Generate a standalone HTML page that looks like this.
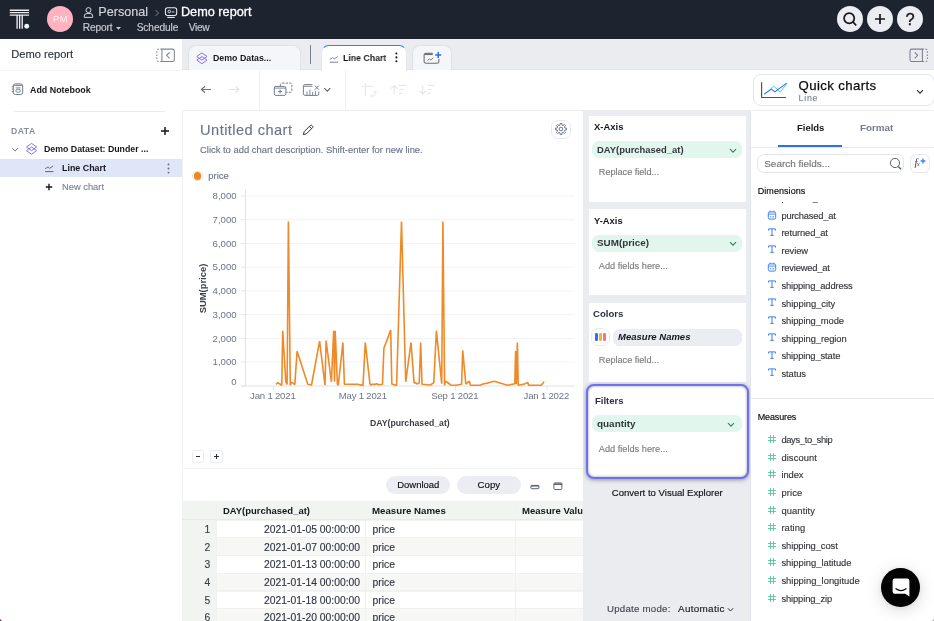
<!DOCTYPE html>
<html lang="en">
<head>
<meta charset="utf-8">
<title>Demo report</title>
<style>
*{margin:0;padding:0;box-sizing:border-box}
html,body{width:934px;height:621px;overflow:hidden;background:#fff}
body{font-family:"Liberation Sans",Arial,sans-serif;color:#1f2430;position:relative;font-size:11px}
.abs{position:absolute}
.t{position:absolute;white-space:nowrap;line-height:16px;height:16px}
.b{font-weight:bold}
.fld{font-size:10.3px;color:#2f3440;letter-spacing:.05px}
.ax{font-family:"Liberation Sans",Arial,sans-serif;font-size:9.6px;fill:#6b7489}
#nav{left:0;top:0;width:934px;height:38.7px;background:#1e2330}
.circ{position:absolute;width:26px;height:26px;border-radius:50%;background:#ebedf2;top:5.5px}
#side{left:0;top:38.7px;width:182.6px;height:582.3px;background:#fff;border-right:1px solid #f0f1f4}
#tabs{left:182px;top:38.7px;width:752px;height:31.8px;background:#ebecf0;border-bottom:1px solid #e1e4ea}
.tab{position:absolute;border:1px solid #dfe2e9;border-bottom:none;border-radius:8px 8px 0 0;background:#f5f6f9}
#tool{left:182px;top:70.5px;width:752px;height:40.5px;background:#fff;border-bottom:1px solid #ebedf0}
#cfg{left:583px;top:111px;width:167.2px;height:510px;background:#ebecf0}
.card{position:absolute;left:5.8px;width:157.2px;background:#fff}
.pill{position:absolute;left:8.8px;width:150.6px;height:17.2px;border-radius:6.5px;background:#e1f6ec}
.lbl{font-size:11px;font-weight:bold;color:#1f2430;left:10.5px}
.ph{font-size:10px;color:#8a8f99;left:15.5px}
#right{left:750.2px;top:111px;width:183.8px;height:510px;background:#fff;border-left:1px solid #dfe3ee}
</style>
</head>
<body>
<div id="app" style="position:absolute;left:0;top:0;width:934px;height:621px;will-change:transform">

<!-- ===== top navigation ===== -->
<div id="nav" class="abs">
  
  <div class="abs" style="left:47.3px;top:5.7px;width:26px;height:26px;border-radius:50%;background:#ffb3c0;color:#fff6f8;font-size:9.2px;line-height:26.5px;text-align:center;letter-spacing:.55px;text-indent:.5px">PM</div>
    <svg class="abs" style="left:153.5px;top:8.5px" width="6" height="8" viewBox="0 0 6 8"><path d="M1.5 1l3 3-3 3" fill="none" stroke="#7f8595" stroke-width="1"/></svg>
    <svg class="abs" style="left:116.2px;top:26.6px" width="5" height="3" viewBox="0 0 5 3"><path d="M0 0h5L2.5 2.8z" fill="#c9ccd3"/></svg>

  <div class="circ" style="left:836.8px"><svg width="26" height="26" viewBox="0 0 26 26"><circle cx="12.2" cy="12.2" r="5.1" fill="none" stroke="#15171c" stroke-width="1.7"/><path d="M16 16l3.2 3.4" stroke="#15171c" stroke-width="1.7" fill="none"/></svg></div>
  <div class="circ" style="left:866.9px"><svg width="26" height="26" viewBox="0 0 26 26"><path d="M13 8v10M8 13h10" stroke="#15171c" stroke-width="1.7" fill="none"/></svg></div>
  <div class="circ" style="left:897.2px;color:#15171c;font-size:16.5px;line-height:26.5px;text-align:center;-webkit-text-stroke:.35px #15171c">?</div>
</div>

<!-- ===== left sidebar ===== -->
<div id="side" class="abs"></div>
<div class="abs" style="left:0;top:70px;width:181px;height:1px;background:#f1f2f5"></div>
<div class="abs" style="left:14px;top:111px;width:151px;height:1px;background:#e8eaee"></div>
<svg class="abs" style="left:160px;top:126px" width="10" height="10" viewBox="0 0 10 10"><path d="M5 1v8M1 5h8" stroke="#15171c" stroke-width="1.5" fill="none"/></svg>
<div class="abs" style="left:0;top:158.8px;width:182px;height:18.3px;background:#dfe6f8"></div>
<svg class="abs" style="left:167.300px;top:162.500px" width="3" height="11" viewBox="0 0 3 11"><circle cx="1.500" cy="1.400" r="0.950" fill="#656c7d"/><circle cx="1.500" cy="5.500" r="0.950" fill="#656c7d"/><circle cx="1.500" cy="9.600" r="0.950" fill="#656c7d"/></svg>
<svg class="abs" style="left:44.9px;top:183.2px" width="8" height="8" viewBox="0 0 8 8"><path d="M4 0.800v6.400M0.800 4h6.400" stroke="#15171c" stroke-width="1.400" fill="none"/></svg>

<!-- ===== tab bar ===== -->
<div id="tabs" class="abs"></div>
<div class="tab" style="left:188px;top:45.3px;width:112.5px;height:25px"></div>
<div class="tab" style="left:320.8px;top:44.7px;width:86.2px;height:27px;background:#fff;border-top:1.7px solid #3b7cf0;border-color:#3b7cf0 #e4e7ee #e4e7ee"></div>
<div class="tab" style="left:412.2px;top:45.3px;width:39.5px;height:25px"></div>
<div class="abs" style="left:310px;top:45.200px;width:1px;height:18.500px;background:#7a8194"></div>

<!-- ===== toolbar ===== -->
<div id="tool" class="abs"></div>
<div class="abs" style="left:259px;top:71px;width:1px;height:39.500px;background:#eef0f3"></div>
<div class="abs" style="left:345px;top:71px;width:1px;height:39.500px;background:#eef0f3"></div>

<!-- quick charts selector -->
<div class="abs" style="left:753px;top:74px;width:182px;height:31.600px;border:1px solid #e3e5ea;border-radius:8px;background:#fff"></div>
<svg class="abs" style="left:916px;top:88.500px" width="8" height="6" viewBox="0 0 8 6"><path d="M1 1.200l3 3 3-3" fill="none" stroke="#2a2f3d" stroke-width="1.200"/></svg>

<!-- ===== chart panel ===== -->
<svg class="abs" style="left:302px;top:124px" width="12" height="12" viewBox="0 0 12 12"><path d="M1.400 10.600l0.800-3L8.400 1.400a1 1 0 0 1 1.400 0l0.800 0.800a1 1 0 0 1 0 1.400L4.400 9.800z" fill="none" stroke="#2a2f3d" stroke-width="1"/><path d="M7.400 2.400l2.200 2.200" stroke="#2a2f3d" stroke-width="1"/></svg>
<div class="abs" style="left:551px;top:119.800px;width:19.500px;height:19.500px;border:1px solid #e6e8ee;border-radius:7px;background:#fff"></div>
<svg class="abs" style="left:554.7px;top:123.2px" width="12" height="12" viewBox="0 0 12 12"><circle cx="6" cy="6" r="1.8" fill="none" stroke="#666d7e" stroke-width="0.9"/><path d="M5.07 2.11L5.12 0.47L6.88 0.47L6.93 2.11L8.09 2.59L9.29 1.47L10.53 2.71L9.41 3.91L9.89 5.07L11.53 5.12L11.53 6.88L9.89 6.93L9.41 8.09L10.53 9.29L9.29 10.53L8.09 9.41L6.93 9.89L6.88 11.53L5.12 11.53L5.07 9.89L3.91 9.41L2.71 10.53L1.47 9.29L2.59 8.09L2.11 6.93L0.47 6.88L0.47 5.12L2.11 5.07L2.59 3.91L1.47 2.71L2.71 1.47L3.91 2.59z" fill="none" stroke="#666d7e" stroke-width="0.9" stroke-linejoin="round"/></svg>

<div class="abs" style="left:192.300px;top:171px;width:10.400px;height:10.400px;border-radius:50%;border:1px solid #e2e2e2;background:#fff"></div>
<div class="abs" style="left:193.700px;top:172.400px;width:7.600px;height:7.600px;border-radius:50%;background:#f0861f"></div>

<svg class="abs" style="left:0;top:0" width="934" height="621" viewBox="0 0 934 621">
<line x1="245.5" y1="196.0" x2="574.5" y2="196.0" stroke="#f3f3f3" stroke-width="1"/>
<line x1="241" y1="196.0" x2="245.5" y2="196.0" stroke="#e4e4e4" stroke-width="1"/>
<line x1="245.5" y1="219.7" x2="574.5" y2="219.7" stroke="#f3f3f3" stroke-width="1"/>
<line x1="241" y1="219.7" x2="245.5" y2="219.7" stroke="#e4e4e4" stroke-width="1"/>
<line x1="245.5" y1="243.5" x2="574.5" y2="243.5" stroke="#f3f3f3" stroke-width="1"/>
<line x1="241" y1="243.5" x2="245.5" y2="243.5" stroke="#e4e4e4" stroke-width="1"/>
<line x1="245.5" y1="267.2" x2="574.5" y2="267.2" stroke="#f3f3f3" stroke-width="1"/>
<line x1="241" y1="267.2" x2="245.5" y2="267.2" stroke="#e4e4e4" stroke-width="1"/>
<line x1="245.5" y1="290.9" x2="574.5" y2="290.9" stroke="#f3f3f3" stroke-width="1"/>
<line x1="241" y1="290.9" x2="245.5" y2="290.9" stroke="#e4e4e4" stroke-width="1"/>
<line x1="245.5" y1="314.6" x2="574.5" y2="314.6" stroke="#f3f3f3" stroke-width="1"/>
<line x1="241" y1="314.6" x2="245.5" y2="314.6" stroke="#e4e4e4" stroke-width="1"/>
<line x1="245.5" y1="338.4" x2="574.5" y2="338.4" stroke="#f3f3f3" stroke-width="1"/>
<line x1="241" y1="338.4" x2="245.5" y2="338.4" stroke="#e4e4e4" stroke-width="1"/>
<line x1="245.5" y1="362.1" x2="574.5" y2="362.1" stroke="#f3f3f3" stroke-width="1"/>
<line x1="241" y1="362.1" x2="245.5" y2="362.1" stroke="#e4e4e4" stroke-width="1"/>
<line x1="241" y1="385.8" x2="245.5" y2="385.8" stroke="#e4e4e4" stroke-width="1"/>
<line x1="245.500" y1="190" x2="245.500" y2="386.500" stroke="#e2e2e2" stroke-width="1"/>
<line x1="241" y1="386" x2="574.500" y2="386" stroke="#e2e2e2" stroke-width="1"/>
<text x="236.6" y="199.2" text-anchor="end" class="ax">8,000</text>
<text x="236.6" y="222.9" text-anchor="end" class="ax">7,000</text>
<text x="236.6" y="246.7" text-anchor="end" class="ax">6,000</text>
<text x="236.6" y="270.4" text-anchor="end" class="ax">5,000</text>
<text x="236.6" y="294.1" text-anchor="end" class="ax">4,000</text>
<text x="236.6" y="317.8" text-anchor="end" class="ax">3,000</text>
<text x="236.6" y="341.6" text-anchor="end" class="ax">2,000</text>
<text x="236.6" y="365.3" text-anchor="end" class="ax">1,000</text>
<text x="236.6" y="385.4" text-anchor="end" class="ax">0</text>
<line x1="273.6" y1="386" x2="273.6" y2="390.5" stroke="#e4e4e4" stroke-width="1"/>
<text x="272.8" y="398.6" text-anchor="middle" class="ax" style="font-size:9.6px;letter-spacing:-.2px">Jan 1 2021</text>
<line x1="363.6" y1="386" x2="363.6" y2="390.5" stroke="#e4e4e4" stroke-width="1"/>
<text x="362.8" y="398.6" text-anchor="middle" class="ax" style="font-size:9.6px;letter-spacing:-.2px">May 1 2021</text>
<line x1="455.6" y1="386" x2="455.6" y2="390.5" stroke="#e4e4e4" stroke-width="1"/>
<text x="454.8" y="398.6" text-anchor="middle" class="ax" style="font-size:9.6px;letter-spacing:-.2px">Sep 1 2021</text>
<line x1="547.1" y1="386" x2="547.1" y2="390.5" stroke="#e4e4e4" stroke-width="1"/>
<text x="546.3000000000001" y="398.6" text-anchor="middle" class="ax" style="font-size:9.6px;letter-spacing:-.2px">Jan 1 2022</text>
<text transform="translate(206.300,288.500) rotate(-90)" text-anchor="middle" style="font-family:'Liberation Sans',Arial,sans-serif;font-size:9.400px;font-weight:bold;fill:#3a3f4a">SUM(price)</text>

<polyline points="276.2,384.5 277.7,382.6 281.8,385.2 282.7,330.7 285.8,382.0 287.1,384.5 288.4,221.5 290.3,385.4 291.2,382.2 293.1,383.1 294.8,384.8 297.1,351.3 307.8,384.3 311.5,385.0 319.6,341.1 325.0,385.2 326.1,340.5 331.4,381.8 333.7,330.7 334.5,381.8 335.2,330.7 337.4,384.3 338.3,385.2 342.9,342.5 344.4,384.3 357.4,384.3 363.0,385.4 365.3,342.5 369.9,383.7 371.0,385.2 372.4,384.0 374.7,384.5 376.6,383.7 378.6,384.8 382.5,384.3 383.9,348.2 390.7,330.1 391.8,384.0 396.6,385.4 401.5,221.5 405.7,381.8 411.0,342.5 414.1,383.1 415.5,382.6 416.9,384.0 419.2,383.1 420.7,342.5 422.0,384.3 430.5,385.0 433.8,382.6 436.4,330.7 441.7,383.7 442.9,221.5 444.6,385.4 445.3,381.2 446.8,382.0 450.8,385.0 455.8,385.2 461.6,384.3 462.7,350.4 465.8,384.0 469.4,381.2 470.5,385.2 479.9,385.2 483.8,383.7 487.8,383.1 494.2,381.2 507.5,385.2 514.8,383.7 515.6,351.0 516.3,384.3 517.4,342.5 518.2,385.2 524.4,384.0 527.8,382.6 528.6,385.2 541.3,385.2 544.1,381.8" fill="none" stroke="#ee8a27" stroke-width="1.6" stroke-linejoin="bevel"/>
</svg>

<!-- zoom buttons -->
<div class="abs" style="left:191.500px;top:450.200px;width:12.600px;height:12.600px;border:1px solid #e9ebef;border-radius:2.500px;background:#fff"></div>
<div class="abs" style="left:195.500px;top:455.700px;width:4.600px;height:1.600px;background:#2a2f3d"></div>
<div class="abs" style="left:210.300px;top:450.200px;width:12.600px;height:12.600px;border:1px solid #e9ebef;border-radius:2.500px;background:#fff"></div>
<div class="abs" style="left:214.200px;top:455.700px;width:4.800px;height:1.600px;background:#2a2f3d"></div>
<div class="abs" style="left:215.800px;top:454.100px;width:1.600px;height:4.800px;background:#2a2f3d"></div>
<div class="abs" style="left:182px;top:468px;width:401px;height:1px;background:#f1f2f4"></div>

<!-- table controls -->
<div class="abs" style="left:386.400px;top:475.800px;width:64px;height:18.600px;border-radius:9.300px;background:#ebedf2"></div>
<div class="abs" style="left:457.200px;top:475.800px;width:64px;height:18.600px;border-radius:9.300px;background:#ebedf2"></div>
<svg class="abs" style="left:530px;top:484px" width="10" height="7" viewBox="0 0 10 7"><rect x="0.900" y="1.400" width="8.000" height="3.300" rx="0.800" fill="none" stroke="#5d6579" stroke-width="1"/><path d="M0.900 2h8.200" stroke="#5d6579" stroke-width="1.200"/></svg>
<svg class="abs" style="left:552.500px;top:481.500px" width="10" height="9" viewBox="0 0 10 9"><rect x="0.900" y="0.900" width="8.000" height="6.600" rx="0.900" fill="none" stroke="#5d6579" stroke-width="1"/><path d="M0.900 2.200h8.200" stroke="#5d6579" stroke-width="1.600"/></svg>

<!-- table -->
<div class="abs" style="left:182px;top:501.200px;width:401px;height:120px;background:#f2f4f2"></div>
<div class="abs" style="left:182px;top:519.4px;width:401px;height:1px;background:#e8eae8"></div>
<div class="abs" style="left:216.5px;top:520.70px;width:366.5px;height:17.7px;background:#ffffff;border-bottom:1px solid #f0f0f0;box-sizing:border-box"></div>
<div class="abs" style="left:216.5px;top:538.40px;width:366.5px;height:17.7px;background:#f7f7f6;border-bottom:1px solid #f0f0f0;box-sizing:border-box"></div>
<div class="abs" style="left:216.5px;top:556.10px;width:366.5px;height:17.7px;background:#ffffff;border-bottom:1px solid #f0f0f0;box-sizing:border-box"></div>
<div class="abs" style="left:216.5px;top:573.80px;width:366.5px;height:17.7px;background:#f7f7f6;border-bottom:1px solid #f0f0f0;box-sizing:border-box"></div>
<div class="abs" style="left:216.5px;top:591.50px;width:366.5px;height:17.7px;background:#ffffff;border-bottom:1px solid #f0f0f0;box-sizing:border-box"></div>
<div class="abs" style="left:216.5px;top:609.20px;width:366.5px;height:17.7px;background:#f7f7f6;border-bottom:1px solid #f0f0f0;box-sizing:border-box"></div>
<div class="abs" style="left:216px;top:501.200px;width:1px;height:120px;background:#f0f1f0"></div>
<div class="abs" style="left:365.2px;top:501.200px;width:1px;height:120px;background:#f0f1f0"></div>
<div class="abs" style="left:515.300px;top:501.200px;width:1px;height:120px;background:#f0f1f0"></div>


<!-- ===== config panel ===== -->
<div id="cfg" class="abs">
  <div class="card" style="top:4.7px;height:86.5px">
  </div>
  <div class="card" style="top:97.7px;height:86.5px">
  </div>
  <div class="card" style="top:191.7px;height:79px">
  </div>
  <div class="abs" style="left:3.2px;top:273.4px;width:162.6px;height:94.600px;border:2.7px solid #6c70f4;border-radius:8px;background:#fff;box-shadow:0 1px 4px rgba(40,40,60,.45),inset 0 0 3px rgba(0,0,0,.4)"></div>
</div>
<div class="pill" style="left:591.7px;top:141.0px"></div>
<svg class="abs" style="left:729px;top:147.500px" width="8" height="6" viewBox="0 0 8 6"><path d="M1 1.200l3 3 3-3" fill="none" stroke="#2f7d5b" stroke-width="1.05"/></svg>

<div class="pill" style="left:591.7px;top:234.9px"></div>
<svg class="abs" style="left:729px;top:241.400px" width="8" height="6" viewBox="0 0 8 6"><path d="M1 1.200l3 3 3-3" fill="none" stroke="#2f7d5b" stroke-width="1.05"/></svg>

<div class="abs" style="left:591.3px;top:328.1px;width:18.4px;height:17.8px;border-radius:7px;border:1px solid #e9ebf0;background:#fff"></div>
<div class="abs" style="left:594.8px;top:333.2px;width:3.2px;height:7.9px;border-radius:1.2px;background:#2f6df2"></div>
<div class="abs" style="left:598.9px;top:333.2px;width:3.2px;height:7.9px;border-radius:1.2px;background:#ebb635"></div>
<div class="abs" style="left:603px;top:333.2px;width:3.2px;height:7.9px;border-radius:1.2px;background:#fb7088"></div>
<div class="pill" style="left:613px;top:328.6px;width:129.3px;background:#ebedf2"></div>

<div class="pill" style="left:591.800px;top:415.200px"></div>
<svg class="abs" style="left:726.500px;top:421.500px" width="8" height="6" viewBox="0 0 8 6"><path d="M1 1.200l3 3 3-3" fill="none" stroke="#2f7d5b" stroke-width="1.05"/></svg>

<svg class="abs" style="left:726.6px;top:606.5px" width="7" height="6" viewBox="0 0 7 6"><path d="M0.800 1.200l2.700 2.800 2.700-2.800" fill="none" stroke="#2a2f3d" stroke-width="1"/></svg>

<!-- ===== right fields panel ===== -->
<div id="right" class="abs"></div>
<div class="abs" style="left:751px;top:146.600px;width:183px;height:1px;background:#e6e8ee"></div>
<div class="abs" style="left:778.400px;top:145.3px;width:63.400px;height:2px;background:#2f6fe8"></div>
<div class="abs" style="left:757.300px;top:154.400px;width:146.600px;height:18.400px;border:1px solid #e3e5ea;border-radius:7px;background:#fff"></div>
<svg class="abs" style="left:889px;top:157px" width="14" height="14" viewBox="0 0 14 14"><circle cx="6" cy="6" r="4.600" fill="none" stroke="#5d6579" stroke-width="1"/><path d="M9.300 9.500l2.700 2.800" stroke="#5d6579" stroke-width="1.500" fill="none"/></svg>
<div class="abs" style="left:910px;top:154.400px;width:19.500px;height:18.400px;border:1px solid #e6e8ee;border-radius:6px;background:#fff"></div>
<div class="t" style="left:914.5px;top:155px;font-size:10.5px;font-style:italic;font-family:'Liberation Serif',serif;color:#3c414c">f<span style="font-size:6.5px;margin-left:-.6px">x</span></div>
<svg class="abs" style="left:920.3px;top:158.4px" width="6" height="6" viewBox="0 0 6 6"><path d="M3 0.600v4.800M0.600 3h4.800" stroke="#3b82f6" stroke-width="1.300"/></svg>
<div class="abs" style="left:751.5px;top:201.8px;width:182.5px;height:185px;overflow:hidden">
  <div class="t" style="left:29.9px;top:-11.8px;font-size:9.4px;color:#333539">product_name</div>
</div>
<svg class="abs" style="left:767px;top:209.50px" width="10" height="10" viewBox="0 0 10 10"><rect x="1.300" y="1.900" width="7.400" height="7.200" rx="1.500" fill="none" stroke="#3d7ff2" stroke-width="1"/><path d="M1.300 4.100h7.400" fill="none" stroke="#3d7ff2" stroke-width="0.900"/><path d="M3.100 0.600v1.600M6.900 0.600v1.600" fill="none" stroke="#3d7ff2" stroke-width="1"/><path d="M3 6.800h1.200M5.400 6.800h1.600" stroke="#3d7ff2" stroke-width="1"/></svg>
<svg class="abs" style="left:767px;top:226.75px" width="10" height="10" viewBox="0 0 10 10"><path d="M1.6 3.6V1.9h6.800v1.700M5 1.900v6.500M3.300 8.400h3.400" fill="none" stroke="#3d7ff2" stroke-width="1"/></svg>
<svg class="abs" style="left:767px;top:244.30px" width="10" height="10" viewBox="0 0 10 10"><path d="M1.6 3.6V1.9h6.800v1.700M5 1.900v6.500M3.300 8.400h3.400" fill="none" stroke="#3d7ff2" stroke-width="1"/></svg>
<svg class="abs" style="left:767px;top:262.15px" width="10" height="10" viewBox="0 0 10 10"><rect x="1.300" y="1.900" width="7.400" height="7.200" rx="1.500" fill="none" stroke="#3d7ff2" stroke-width="1"/><path d="M1.300 4.100h7.400" fill="none" stroke="#3d7ff2" stroke-width="0.900"/><path d="M3.100 0.600v1.600M6.900 0.600v1.600" fill="none" stroke="#3d7ff2" stroke-width="1"/><path d="M3 6.800h1.200M5.400 6.800h1.600" stroke="#3d7ff2" stroke-width="1"/></svg>
<svg class="abs" style="left:767px;top:279.40px" width="10" height="10" viewBox="0 0 10 10"><path d="M1.6 3.6V1.9h6.800v1.700M5 1.900v6.500M3.300 8.400h3.400" fill="none" stroke="#3d7ff2" stroke-width="1"/></svg>
<svg class="abs" style="left:767px;top:296.95px" width="10" height="10" viewBox="0 0 10 10"><path d="M1.6 3.6V1.9h6.800v1.700M5 1.900v6.500M3.300 8.400h3.400" fill="none" stroke="#3d7ff2" stroke-width="1"/></svg>
<svg class="abs" style="left:767px;top:314.50px" width="10" height="10" viewBox="0 0 10 10"><path d="M1.6 3.6V1.9h6.800v1.700M5 1.900v6.500M3.300 8.400h3.400" fill="none" stroke="#3d7ff2" stroke-width="1"/></svg>
<svg class="abs" style="left:767px;top:332.05px" width="10" height="10" viewBox="0 0 10 10"><path d="M1.6 3.6V1.9h6.800v1.700M5 1.900v6.500M3.300 8.400h3.400" fill="none" stroke="#3d7ff2" stroke-width="1"/></svg>
<svg class="abs" style="left:767px;top:349.60px" width="10" height="10" viewBox="0 0 10 10"><path d="M1.6 3.6V1.9h6.800v1.700M5 1.900v6.500M3.300 8.400h3.400" fill="none" stroke="#3d7ff2" stroke-width="1"/></svg>
<svg class="abs" style="left:767px;top:367.15px" width="10" height="10" viewBox="0 0 10 10"><path d="M1.6 3.6V1.9h6.800v1.700M5 1.900v6.500M3.300 8.400h3.400" fill="none" stroke="#3d7ff2" stroke-width="1"/></svg>
<svg class="abs" style="left:767px;top:434.20px" width="10" height="10" viewBox="0 0 10 10"><path d="M3.500 1v8M6.500 1v8M1 3.500h8M1 6.500h8" fill="none" stroke="#4cc596" stroke-width="0.85"/></svg>
<svg class="abs" style="left:767px;top:451.80px" width="10" height="10" viewBox="0 0 10 10"><path d="M3.500 1v8M6.500 1v8M1 3.500h8M1 6.500h8" fill="none" stroke="#4cc596" stroke-width="0.85"/></svg>
<svg class="abs" style="left:767px;top:469.40px" width="10" height="10" viewBox="0 0 10 10"><path d="M3.500 1v8M6.500 1v8M1 3.500h8M1 6.500h8" fill="none" stroke="#4cc596" stroke-width="0.85"/></svg>
<svg class="abs" style="left:767px;top:487.00px" width="10" height="10" viewBox="0 0 10 10"><path d="M3.500 1v8M6.500 1v8M1 3.500h8M1 6.500h8" fill="none" stroke="#4cc596" stroke-width="0.85"/></svg>
<svg class="abs" style="left:767px;top:504.60px" width="10" height="10" viewBox="0 0 10 10"><path d="M3.500 1v8M6.500 1v8M1 3.500h8M1 6.500h8" fill="none" stroke="#4cc596" stroke-width="0.85"/></svg>
<svg class="abs" style="left:767px;top:522.20px" width="10" height="10" viewBox="0 0 10 10"><path d="M3.500 1v8M6.500 1v8M1 3.500h8M1 6.500h8" fill="none" stroke="#4cc596" stroke-width="0.85"/></svg>
<svg class="abs" style="left:767px;top:539.80px" width="10" height="10" viewBox="0 0 10 10"><path d="M3.500 1v8M6.500 1v8M1 3.500h8M1 6.500h8" fill="none" stroke="#4cc596" stroke-width="0.85"/></svg>
<svg class="abs" style="left:767px;top:557.40px" width="10" height="10" viewBox="0 0 10 10"><path d="M3.500 1v8M6.500 1v8M1 3.500h8M1 6.500h8" fill="none" stroke="#4cc596" stroke-width="0.85"/></svg>
<svg class="abs" style="left:767px;top:575.00px" width="10" height="10" viewBox="0 0 10 10"><path d="M3.500 1v8M6.500 1v8M1 3.500h8M1 6.500h8" fill="none" stroke="#4cc596" stroke-width="0.85"/></svg>
<svg class="abs" style="left:767px;top:592.60px" width="10" height="10" viewBox="0 0 10 10"><path d="M3.500 1v8M6.500 1v8M1 3.500h8M1 6.500h8" fill="none" stroke="#4cc596" stroke-width="0.85"/></svg>
<div class="abs" style="left:751px;top:398.300px;width:183px;height:1px;background:#e6e8ee"></div>

<div class="t" style="left:98.30px;top:4px;font-size:12.64px;color:#d2d5da;-webkit-text-stroke:.15px #d2d5da">Personal</div>
<div class="t" style="left:180.90px;top:4px;font-size:12.72px;color:#ffffff;-webkit-text-stroke:.3px #fff">Demo report</div>
<div class="t" style="left:82.80px;top:20px;font-size:10.20px;color:#c9ccd3;letter-spacing:-0.143px;-webkit-text-stroke:.15px #c9ccd3">Report</div>
<div class="t" style="left:136.70px;top:20px;font-size:10.20px;color:#c9ccd3;letter-spacing:-0.119px;-webkit-text-stroke:.15px #c9ccd3">Schedule</div>
<div class="t" style="left:188.80px;top:20px;font-size:10.20px;color:#c9ccd3;letter-spacing:-0.342px;-webkit-text-stroke:.15px #c9ccd3">View</div>
<div class="t" style="left:11.20px;top:46px;font-size:11.16px;color:#2a2f3d;-webkit-text-stroke:.14px #2a2f3d">Demo report</div>
<div class="t" style="left:30.10px;top:82px;font-size:9.32px;color:#15171c;font-weight:bold;transform:scaleX(0.9543);transform-origin:0 50%">Add Notebook</div>
<div class="t" style="left:11.00px;top:123px;font-size:8.60px;color:#8a8e9c;letter-spacing:0.530px;font-weight:bold">DATA</div>
<div class="t" style="left:44.40px;top:141px;font-size:9.01px;color:#15171c;font-weight:bold;transform:scaleX(0.9755);transform-origin:0 50%">Demo Dataset: Dunder ...</div>
<div class="t" style="left:61.60px;top:160px;font-size:9.22px;color:#15171c;font-weight:bold;transform:scaleX(0.9648);transform-origin:0 50%">Line Chart</div>
<div class="t" style="left:62.00px;top:179px;font-size:9.33px;color:#7b8398;-webkit-text-stroke:.14px #7b8398">New chart</div>
<div class="t" style="left:213.30px;top:50px;font-size:8.86px;color:#15171c;font-weight:bold;transform:scaleX(0.9948);transform-origin:0 50%">Demo Datas...</div>
<div class="t" style="left:343.30px;top:50px;font-size:9.09px;color:#15171c;font-weight:bold;transform:scaleX(0.9651);transform-origin:0 50%">Line Chart</div>
<div class="t" style="left:200.10px;top:122px;font-size:14.60px;color:#6b7489;letter-spacing:0.452px;-webkit-text-stroke:.14px #6b7489">Untitled chart</div>
<div class="t" style="left:200.00px;top:142px;font-size:9.41px;color:#6b7489;-webkit-text-stroke:.14px #6b7489">Click to add chart description. Shift-enter for new line.</div>
<div class="t" style="left:208.30px;top:168px;font-size:9.41px;color:#6b7489;-webkit-text-stroke:.14px #6b7489">price</div>
<div class="t" style="left:370.10px;top:415px;font-size:8.94px;color:#3a3d44;font-weight:bold;transform:scaleX(0.9719);transform-origin:0 50%">DAY(purchased_at)</div>
<div class="t" style="left:397.20px;top:477px;font-size:9.49px;color:#0c0d10;-webkit-text-stroke:.14px #0c0d10">Download</div>
<div class="t" style="left:477.60px;top:477px;font-size:9.64px;color:#0c0d10;-webkit-text-stroke:.14px #0c0d10">Copy</div>
<div class="t" style="left:222.50px;top:503px;font-size:9.76px;color:#15171c;font-weight:bold;transform:scaleX(0.9711);transform-origin:0 50%">DAY(purchased_at)</div>
<div class="t" style="left:372.40px;top:503px;font-size:9.80px;color:#15171c;font-weight:bold;transform:scaleX(0.9887);transform-origin:0 50%">Measure Names</div>
<div class="t" style="left:521.80px;top:503px;font-size:9.77px;color:#15171c;font-weight:bold;transform:scaleX(0.9784);transform-origin:0 50%;width:62.1px;overflow:hidden">Measure Values</div>
<div class="t" style="left:593.50px;top:119px;font-size:9.90px;color:#15171c;font-weight:bold;transform:scaleX(0.9574);transform-origin:0 50%">X-Axis</div>
<div class="t" style="left:597.00px;top:142px;font-size:9.80px;color:#33363d;font-weight:bold;transform:scaleX(0.9617);transform-origin:0 50%">DAY(purchased_at)</div>
<div class="t" style="left:598.80px;top:164px;font-size:9.12px;color:#7c7c7c;-webkit-text-stroke:.14px #7c7c7c">Replace field...</div>
<div class="t" style="left:593.50px;top:213px;font-size:9.90px;color:#15171c;font-weight:bold;transform:scaleX(0.9482);transform-origin:0 50%">Y-Axis</div>
<div class="t" style="left:596.80px;top:235px;font-size:9.80px;color:#33363d;font-weight:bold;transform:scaleX(1.0072);transform-origin:0 50%">SUM(price)</div>
<div class="t" style="left:598.80px;top:258px;font-size:9.21px;color:#7c7c7c;-webkit-text-stroke:.14px #7c7c7c">Add fields here...</div>
<div class="t" style="left:593.20px;top:306px;font-size:9.50px;color:#2a2f3d;font-weight:bold;transform:scaleX(1.0071);transform-origin:0 50%">Colors</div>
<div class="t" style="left:618.10px;top:329px;font-size:9.51px;color:#15171c;font-weight:bold;font-style:italic">Measure Names</div>
<div class="t" style="left:598.80px;top:352px;font-size:9.12px;color:#7c7c7c;-webkit-text-stroke:.14px #7c7c7c">Replace field...</div>
<div class="t" style="left:594.70px;top:393px;font-size:9.50px;color:#2a2f3d;font-weight:bold;transform:scaleX(1.0032);transform-origin:0 50%">Filters</div>
<div class="t" style="left:596.60px;top:416px;font-size:9.80px;color:#33363d;font-weight:bold;transform:scaleX(1.0128);transform-origin:0 50%">quantity</div>
<div class="t" style="left:598.80px;top:441px;font-size:9.21px;color:#7c7c7c;-webkit-text-stroke:.14px #7c7c7c">Add fields here...</div>
<div class="t" style="left:611.80px;top:485px;font-size:9.57px;color:#0c0d10;-webkit-text-stroke:.14px #0c0d10">Convert to Visual Explorer</div>
<div class="t" style="left:607.00px;top:601px;font-size:9.70px;color:#41454e;letter-spacing:0.233px;-webkit-text-stroke:.14px #41454e">Update mode:</div>
<div class="t" style="left:678.00px;top:601px;font-size:9.90px;color:#15171c;letter-spacing:0.310px;-webkit-text-stroke:.14px #15171c">Automatic</div>
<div class="t" style="left:798.60px;top:78px;font-size:13.20px;color:#0a0b0d;letter-spacing:0.386px;-webkit-text-stroke:.25px #0a0b0d">Quick charts</div>
<div class="t" style="left:798.60px;top:90px;font-size:8.80px;color:#7b8398;letter-spacing:0.721px;-webkit-text-stroke:.14px #7b8398">Line</div>
<div class="t" style="left:796.70px;top:120px;font-size:9.82px;color:#15171c;font-weight:bold;transform:scaleX(0.9654);transform-origin:0 50%">Fields</div>
<div class="t" style="left:860.10px;top:120px;font-size:9.50px;color:#727a8e;font-weight:bold;transform:scaleX(1.0342);transform-origin:0 50%">Format</div>
<div class="t" style="left:764.20px;top:156px;font-size:9.98px;color:#737373;-webkit-text-stroke:.14px #737373">Search fields...</div>
<div class="t" style="left:757.70px;top:183px;font-size:9.00px;color:#0a0b0d;letter-spacing:0.065px;-webkit-text-stroke:.15px #0a0b0d">Dimensions</div>
<div class="t" style="left:757.70px;top:409px;font-size:9.00px;color:#0a0b0d;letter-spacing:-0.131px;-webkit-text-stroke:.15px #0a0b0d">Measures</div>
<div class="t" style="left:781.40px;top:208px;font-size:9.40px;color:#333539;letter-spacing:-0.215px;-webkit-text-stroke:.14px #333539">purchased_at</div>
<div class="t" style="left:781.40px;top:225px;font-size:9.40px;color:#333539;letter-spacing:-0.138px;-webkit-text-stroke:.14px #333539">returned_at</div>
<div class="t" style="left:781.40px;top:243px;font-size:9.40px;color:#333539;letter-spacing:-0.073px;-webkit-text-stroke:.14px #333539">review</div>
<div class="t" style="left:781.40px;top:260px;font-size:9.40px;color:#333539;letter-spacing:-0.209px;-webkit-text-stroke:.14px #333539">reviewed_at</div>
<div class="t" style="left:781.40px;top:278px;font-size:9.40px;color:#333539;letter-spacing:-0.139px;-webkit-text-stroke:.14px #333539">shipping_address</div>
<div class="t" style="left:781.40px;top:296px;font-size:9.40px;color:#333539;letter-spacing:-0.029px;-webkit-text-stroke:.14px #333539">shipping_city</div>
<div class="t" style="left:781.40px;top:313px;font-size:9.40px;color:#333539;letter-spacing:-0.080px;-webkit-text-stroke:.14px #333539">shipping_mode</div>
<div class="t" style="left:781.40px;top:331px;font-size:9.40px;color:#333539;letter-spacing:-0.063px;-webkit-text-stroke:.14px #333539">shipping_region</div>
<div class="t" style="left:781.40px;top:348px;font-size:9.40px;color:#333539;letter-spacing:-0.110px;-webkit-text-stroke:.14px #333539">shipping_state</div>
<div class="t" style="left:781.40px;top:366px;font-size:9.40px;color:#333539;letter-spacing:-0.076px;-webkit-text-stroke:.14px #333539">status</div>
<div class="t" style="left:781.40px;top:432px;font-size:9.40px;color:#333539;letter-spacing:-0.354px;-webkit-text-stroke:.14px #333539">days_to_ship</div>
<div class="t" style="left:781.40px;top:450px;font-size:9.40px;color:#333539;letter-spacing:0.084px;-webkit-text-stroke:.14px #333539">discount</div>
<div class="t" style="left:781.40px;top:467px;font-size:9.40px;color:#333539;letter-spacing:-0.068px;-webkit-text-stroke:.14px #333539">index</div>
<div class="t" style="left:781.40px;top:485px;font-size:9.40px;color:#333539;letter-spacing:0.131px;-webkit-text-stroke:.14px #333539">price</div>
<div class="t" style="left:781.40px;top:503px;font-size:9.40px;color:#333539;letter-spacing:0.111px;-webkit-text-stroke:.14px #333539">quantity</div>
<div class="t" style="left:781.40px;top:520px;font-size:9.40px;color:#333539;letter-spacing:0.077px;-webkit-text-stroke:.14px #333539">rating</div>
<div class="t" style="left:781.40px;top:538px;font-size:9.40px;color:#333539;letter-spacing:-0.082px;-webkit-text-stroke:.14px #333539">shipping_cost</div>
<div class="t" style="left:781.40px;top:555px;font-size:9.40px;color:#333539;letter-spacing:-0.016px;-webkit-text-stroke:.14px #333539">shipping_latitude</div>
<div class="t" style="left:781.40px;top:573px;font-size:9.40px;color:#333539;letter-spacing:0.006px;-webkit-text-stroke:.14px #333539">shipping_longitude</div>
<div class="t" style="left:781.40px;top:591px;font-size:9.40px;color:#333539;letter-spacing:-0.124px;-webkit-text-stroke:.14px #333539">shipping_zip</div>
<div class="t" style="left:204.54px;top:522px;font-size:10.35px;color:#3a3f4a;-webkit-text-stroke:.14px #3a3f4a">1</div>
<div class="t" style="left:264.09px;top:522px;font-size:10.35px;color:#2f3440;-webkit-text-stroke:.14px #2f3440">2021-01-05 00:00:00</div>
<div class="t" style="left:372.50px;top:522px;font-size:10.35px;color:#2f3440;-webkit-text-stroke:.14px #2f3440">price</div>
<div class="t" style="left:204.54px;top:540px;font-size:10.35px;color:#3a3f4a;-webkit-text-stroke:.14px #3a3f4a">2</div>
<div class="t" style="left:264.09px;top:540px;font-size:10.35px;color:#2f3440;-webkit-text-stroke:.14px #2f3440">2021-01-07 00:00:00</div>
<div class="t" style="left:372.50px;top:540px;font-size:10.35px;color:#2f3440;-webkit-text-stroke:.14px #2f3440">price</div>
<div class="t" style="left:204.54px;top:557px;font-size:10.35px;color:#3a3f4a;-webkit-text-stroke:.14px #3a3f4a">3</div>
<div class="t" style="left:264.09px;top:557px;font-size:10.35px;color:#2f3440;-webkit-text-stroke:.14px #2f3440">2021-01-13 00:00:00</div>
<div class="t" style="left:372.50px;top:557px;font-size:10.35px;color:#2f3440;-webkit-text-stroke:.14px #2f3440">price</div>
<div class="t" style="left:204.54px;top:575px;font-size:10.35px;color:#3a3f4a;-webkit-text-stroke:.14px #3a3f4a">4</div>
<div class="t" style="left:264.09px;top:575px;font-size:10.35px;color:#2f3440;-webkit-text-stroke:.14px #2f3440">2021-01-14 00:00:00</div>
<div class="t" style="left:372.50px;top:575px;font-size:10.35px;color:#2f3440;-webkit-text-stroke:.14px #2f3440">price</div>
<div class="t" style="left:204.54px;top:593px;font-size:10.35px;color:#3a3f4a;-webkit-text-stroke:.14px #3a3f4a">5</div>
<div class="t" style="left:264.09px;top:593px;font-size:10.35px;color:#2f3440;-webkit-text-stroke:.14px #2f3440">2021-01-18 00:00:00</div>
<div class="t" style="left:372.50px;top:593px;font-size:10.35px;color:#2f3440;-webkit-text-stroke:.14px #2f3440">price</div>
<div class="t" style="left:204.54px;top:610px;font-size:10.35px;color:#3a3f4a;-webkit-text-stroke:.14px #3a3f4a">6</div>
<div class="t" style="left:264.09px;top:610px;font-size:10.35px;color:#2f3440;-webkit-text-stroke:.14px #2f3440">2021-01-20 00:00:00</div>
<div class="t" style="left:372.50px;top:610px;font-size:10.35px;color:#2f3440;-webkit-text-stroke:.14px #2f3440">price</div>
<svg class="abs" style="left:0;top:0;pointer-events:none" width="934" height="621" viewBox="0 0 934 621">
<path d="M31.55 143.40L36.65 147.00L31.55 150.60L26.45 147.00z" fill="none" stroke="#8468e6" stroke-width="0.95" stroke-linejoin="round"/>
<path d="M31.55 147.00L36.65 150.60L31.55 154.20L26.45 150.60z" fill="none" stroke="#8468e6" stroke-width="0.95" stroke-linejoin="round"/>
<path d="M201.90 52.90L207.00 56.50L201.90 60.10L196.80 56.50z" fill="none" stroke="#8468e6" stroke-width="0.95" stroke-linejoin="round"/>
<path d="M201.90 56.50L207.00 60.10L201.90 63.70L196.80 60.10z" fill="none" stroke="#8468e6" stroke-width="0.95" stroke-linejoin="round"/>
<path d="M45.10 168.70l2.9 -1.7 1.6 1.3 3.6 -2.3" fill="none" stroke="#5d6579" stroke-width="0.9"/>
<path d="M45.10 171.60h8.3" fill="none" stroke="#5d6579" stroke-width="1.0"/>
<path d="M329.80 59.30l2.9 -1.7 1.6 1.3 3.6 -2.3" fill="none" stroke="#7b8398" stroke-width="0.9"/>
<path d="M329.80 62.20h8.3" fill="none" stroke="#7b8398" stroke-width="1.0"/>
<path d="M161.90 49.10H172.50a1.8 1.8 0 0 1 1.8 1.8V59.70a1.8 1.8 0 0 1 -1.8 1.8H161.90z" fill="none" stroke="#7c8496" stroke-width="1.05"/>
<path d="M161.90 49.10H158.70a1.8 1.8 0 0 0 -1.8 1.8V59.70a1.8 1.8 0 0 0 1.8 1.8H161.90" fill="none" stroke="#7c8496" stroke-width="1.05" stroke-dasharray="1.5 1.6"/>
<path d="M169.60 52.30l-3 3 3 3" fill="none" stroke="#7c8496" stroke-width="1.05"/>
<path d="M922.40 49.10H911.80a1.8 1.8 0 0 0 -1.8 1.8V59.70a1.8 1.8 0 0 0 1.8 1.8H922.40z" fill="none" stroke="#7a8193" stroke-width="1.05"/>
<path d="M922.40 49.10H925.60a1.8 1.8 0 0 1 1.8 1.8V59.70a1.8 1.8 0 0 1 -1.8 1.8H922.40" fill="none" stroke="#7a8193" stroke-width="1.05" stroke-dasharray="1.5 1.6"/>
<path d="M914.70 52.30l3 3 -3 3" fill="none" stroke="#7a8193" stroke-width="1.05"/>
<path d="M12.3 148.3l2.8 2.7 2.8 -2.7" fill="none" stroke="#6b7385" stroke-width="1"/>
<path d="M211 89.5H201.4M205 86.2l-3.6 3.3 3.6 3.3" fill="none" stroke="#6b7385" stroke-width="1.2" />
<path d="M229.1 89.5h9.8M235.4 86.2l3.6 3.3-3.6 3.3" fill="none" stroke="#dfe2e7" stroke-width="1.1" />
<path d="M275.9 86.4h8.4a1.6 1.6 0 0 1 1.6 1.6v5.8a1.600 1.600 0 0 1-1.600 1.600h-8.400a1.600 1.600 0 0 1-1.600-1.600v-5.800a1.600 1.600 0 0 1 1.600-1.600z" fill="none" stroke="#737b8d" stroke-width="1.0" />
<path d="M274.3 88.1h11.600" fill="none" stroke="#737b8d" stroke-width="0.9" />
<path d="M280.1 89.6v3.800M278.200 91.500h3.800" fill="none" stroke="#737b8d" stroke-width="1.0" />
<path d="M280.4 86v-1.400a1.500 1.500 0 0 1 1.500-1.500h8.500a1.500 1.500 0 0 1 1.500 1.500v6.200a1.500 1.500 0 0 1-1.500 1.500h-4" fill="none" stroke="#737b8d" stroke-width="1.0" stroke-dasharray="2.400 1.200"/>
<path d="M312.4 84.600h-7.300a1.700 1.700 0 0 0-1.700 1.700v7.400a1.700 1.700 0 0 0 1.700 1.700h12a1.700 1.700 0 0 0 1.700-1.700v-2.100" fill="none" stroke="#737b8d" stroke-width="1.0" />
<path d="M303.800 86.300h8.600" fill="none" stroke="#737b8d" stroke-width="0.9" />
<path d="M307 95v-3.600M309.900 95v-5.400M312.600 95v-3M315.400 95v-4.200" fill="none" stroke="#737b8d" stroke-width="0.9" />
<path d="M314.900 85.600l4 4M318.900 85.600l-4 4" fill="none" stroke="#737b8d" stroke-width="1.0" />
<path d="M324.300 88.100l3 3 3-3" fill="none" stroke="#5d6579" stroke-width="1.2" />
<path d="M365.300 83v12.500M361.700 86.300h12.600" fill="none" stroke="#e4e6eb" stroke-width="1.1" />
<path d="M370.600 96.100h2.500a2 2 0 0 0 2-2v-2.800M371.800 94.600l-1.500 1.500 1.500 1.500M373.600 92.600l1.500-1.500 1.500 1.500" fill="none" stroke="#e4e6eb" stroke-width="1.0" />
<path d="M394.200 94.200V85.700M391 88.600l3.200-3 3.200 3" fill="none" stroke="#e4e6eb" stroke-width="1.1" />
<path d="M399.100 85.400h6.900M399.100 89.500h4.300M399.100 93.400h2.800" fill="none" stroke="#e4e6eb" stroke-width="1.1" />
<path d="M422.700 85.400v8.500M419.500 91l3.200 3 3.200-3" fill="none" stroke="#e4e6eb" stroke-width="1.1" />
<path d="M427.800 85.400h6.400M427.800 89.500h4M427.800 93.400h2.400" fill="none" stroke="#e4e6eb" stroke-width="1.1" />
<path d="M432.600 53.300h-6.600a1.900 1.900 0 0 0-1.900 1.900v6.200a1.900 1.900 0 0 0 1.900 1.900h11a1.900 1.900 0 0 0 1.900-1.900v-2.600" fill="none" stroke="#686c75" stroke-width="1.05" />
<path d="M424.600 54.300h8.200" fill="none" stroke="#686c75" stroke-width="1.5" />
<path d="M427.400 60.600l2-1.700 1.400 1.100 2.400-2" fill="none" stroke="#686c75" stroke-width="0.9" />
<path d="M438.200 52.100v6M435.200 55.100h6" fill="none" stroke="#2b6df0" stroke-width="1.5" />
<circle cx="396.400" cy="53.50" r="1.050" fill="#15171c"/>
<circle cx="396.400" cy="57.40" r="1.050" fill="#15171c"/>
<circle cx="396.400" cy="61.30" r="1.050" fill="#15171c"/>
<rect x="13.300" y="83.900" width="9.400" height="10.600" rx="2.100" fill="none" stroke="#6f778a" stroke-width="1"/>
<path d="M14.300 85.400h7.400" fill="none" stroke="#6f778a" stroke-width="1.0" />
<path d="M11.700 86.700h1.700M11.700 89.200h1.700M11.700 91.700h1.700" fill="none" stroke="#6f778a" stroke-width="0.9" />
<path d="M15.700 87.900h4.800" fill="none" stroke="#6f778a" stroke-width="0.9" />
<rect x="15.900" y="89.300" width="4.400" height="2.900" rx="1.300" fill="none" stroke="#6f778a" stroke-width="0.9"/>
<path d="M761.600 82.200v15.300h24.300" fill="none" stroke="#4b4e55" stroke-width="1.15" />
<path d="M764.600 94.400L773.800 86.200L780.400 92.100L786.700 83.600" fill="none" stroke="#39c8ef" stroke-width="0.9" stroke-linejoin="round"/>
<path d="M764.100 94.100L771.400 89.100L774.800 91.900L786.700 83.100" fill="none" stroke="#2f6df2" stroke-width="1.1" stroke-linejoin="round"/>
<path d="M9.800 10.200h19.300M9.800 12.650h19.300M9.800 15.100h19.300" fill="none" stroke="#ececee" stroke-width="1.35" />
<path d="M17.100 15.100v13.600M19.650 15.100v13.600M22.200 15.100v13.600" fill="none" stroke="#ececee" stroke-width="1.35" />
<circle cx="26.700" cy="26.300" r="2.450" fill="#f4f4f5"/>
<circle cx="88.500" cy="10.100" r="2.500" fill="none" stroke="#d5d7dd" stroke-width="1"/>
<path d="M84.300 17.400v-1.300a2.600 2.600 0 0 1 2.600-2.600h3.200a2.600 2.600 0 0 1 2.600 2.600v1.300z" fill="none" stroke="#d5d7dd" stroke-width="1.0" stroke-linejoin="round"/>
<rect x="165.400" y="7.700" width="11.300" height="7.700" rx="2.200" fill="none" stroke="#eceef2" stroke-width="1.050"/>
<circle cx="169.300" cy="11.500" r="1.300" fill="none" stroke="#eceef2" stroke-width="0.9"/>
<path d="M171.800 11.900h2.600" fill="none" stroke="#eceef2" stroke-width="0.9" />
<path d="M167.300 17.400h7.400" fill="none" stroke="#eceef2" stroke-width="1.1" />
</svg>
<svg class="abs" style="left:0;top:617px" width="4" height="4" viewBox="0 0 4 4"><path d="M0 1.6Q0.300 3.700 2.400 4H0z" fill="#3a1446"/></svg>
<svg class="abs" style="left:930px;top:617px" width="4" height="4" viewBox="0 0 4 4"><path d="M4 1.600Q3.700 3.700 1.600 4H4z" fill="#a9a9a9"/></svg>
<!-- chat bubble -->
<div class="abs" style="left:881.2px;top:568px;width:39px;height:39px;border-radius:50%;background:#030303;box-shadow:0 1px 6px rgba(0,0,0,.08),0 3px 18px rgba(0,0,0,.14)"></div>
<svg class="abs" style="left:890.9px;top:577.2px" width="20" height="21" viewBox="0 0 20 21"><path d="M3.800 1.600h12.400a2.200 2.200 0 0 1 2.200 2.200v15.600l-4.200-2.600H3.800a2.200 2.200 0 0 1-2.200-2.200V3.800a2.200 2.200 0 0 1 2.200-2.200z" fill="#fff"/><path d="M5 11.800c3 2.200 7 2.200 10 0" fill="none" stroke="#050505" stroke-width="1.300" stroke-linecap="round"/></svg>

</div>
</body>
</html>
